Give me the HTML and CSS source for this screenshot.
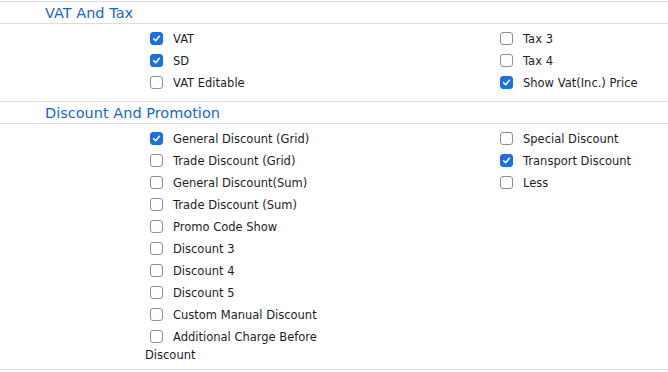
FILE: index.html
```html
<!DOCTYPE html>
<html lang="en">
<head>
  <meta charset="UTF-8">
  <title>Settings</title>
  <link rel="stylesheet" href="styles.css">
</head>
<body>

  <!-- VAT And Tax -->
  <div class="group">
    <div class="group-title">VAT And Tax</div>
    <div class="group-body">
      <div class="col">
        <label class="opt"><span class="box on"><svg viewBox="0 0 13 13"><path d="M3.2 6.8 L5.5 9.1 L9.9 3.9"/></svg></span>VAT</label>
        <label class="opt"><span class="box on"><svg viewBox="0 0 13 13"><path d="M3.2 6.8 L5.5 9.1 L9.9 3.9"/></svg></span>SD</label>
        <label class="opt"><span class="box"></span>VAT Editable</label>
      </div>
      <div class="col">
        <label class="opt"><span class="box"></span>Tax 3</label>
        <label class="opt"><span class="box"></span>Tax 4</label>
        <label class="opt"><span class="box on"><svg viewBox="0 0 13 13"><path d="M3.2 6.8 L5.5 9.1 L9.9 3.9"/></svg></span>Show Vat(Inc.) Price</label>
      </div>
    </div>
  </div>

  <!-- Discount And Promotion -->
  <div class="group last">
    <div class="group-title">Discount And Promotion</div>
    <div class="group-body">
      <div class="col">
        <label class="opt"><span class="box on"><svg viewBox="0 0 13 13"><path d="M3.2 6.8 L5.5 9.1 L9.9 3.9"/></svg></span>General Discount (Grid)</label>
        <label class="opt"><span class="box"></span>Trade Discount (Grid)</label>
        <label class="opt"><span class="box"></span>General Discount(Sum)</label>
        <label class="opt"><span class="box"></span>Trade Discount (Sum)</label>
        <label class="opt"><span class="box"></span>Promo Code Show</label>
        <label class="opt"><span class="box"></span>Discount 3</label>
        <label class="opt"><span class="box"></span>Discount 4</label>
        <label class="opt"><span class="box"></span>Discount 5</label>
        <label class="opt"><span class="box"></span>Custom Manual Discount</label>
        <label class="opt"><span class="box"></span>Additional Charge Before Discount</label>
      </div>
      <div class="col">
        <label class="opt"><span class="box"></span>Special Discount</label>
        <label class="opt"><span class="box on"><svg viewBox="0 0 13 13"><path d="M3.2 6.8 L5.5 9.1 L9.9 3.9"/></svg></span>Transport Discount</label>
        <label class="opt"><span class="box"></span>Less</label>
      </div>
    </div>
  </div>

</body>
</html>
```

FILE: styles.css
```css
* {
  margin: 0;
  padding: 0;
  box-sizing: border-box;
}
body {
  font-family: 'DejaVu Sans', sans-serif;
  font-size: 11.5px;
  color: #1d1d1f;
  background: #ffffff;
  padding-top: 1px;
}
/* Group */
.group {
  border-top: 1px solid #dddbee;
  margin-bottom: 4px;
}
.group.last {
  border-bottom: 1px solid #dddbee;
  margin-bottom: 0;
}
.group-title {
  height: 22px;
  line-height: 22px;
  padding-left: 45px;
  font-size: 14.5px;
  color: #1566d6;
  border-bottom: 1px solid #dddbee;
}
.group-body {
  display: grid;
  grid-template-columns: 350px 1fr;
  padding: 4px 0 3px 145px;
}
.col {
  display: flex;
  flex-direction: column;
}
/* Checkbox */
.opt {
  display: block;
  max-width: 185px;
  line-height: 18px;
  padding: 2px 0;
}
.box {
  display: inline-block;
  width: 13px;
  height: 13px;
  margin: 0 10px 0 5px;
  vertical-align: -2px;
  border: 1px solid #8f8f8f;
  border-radius: 3px;
  background: #fff;
}
.box.on {
  border-color: #1a6fe6;
  background: #1a6fe6;
}
.box svg {
  display: block;
  width: 11px;
  height: 11px;
}
.box svg path {
  fill: none;
  stroke: #fff;
  stroke-width: 2;
  stroke-linecap: round;
  stroke-linejoin: round;
}
```
